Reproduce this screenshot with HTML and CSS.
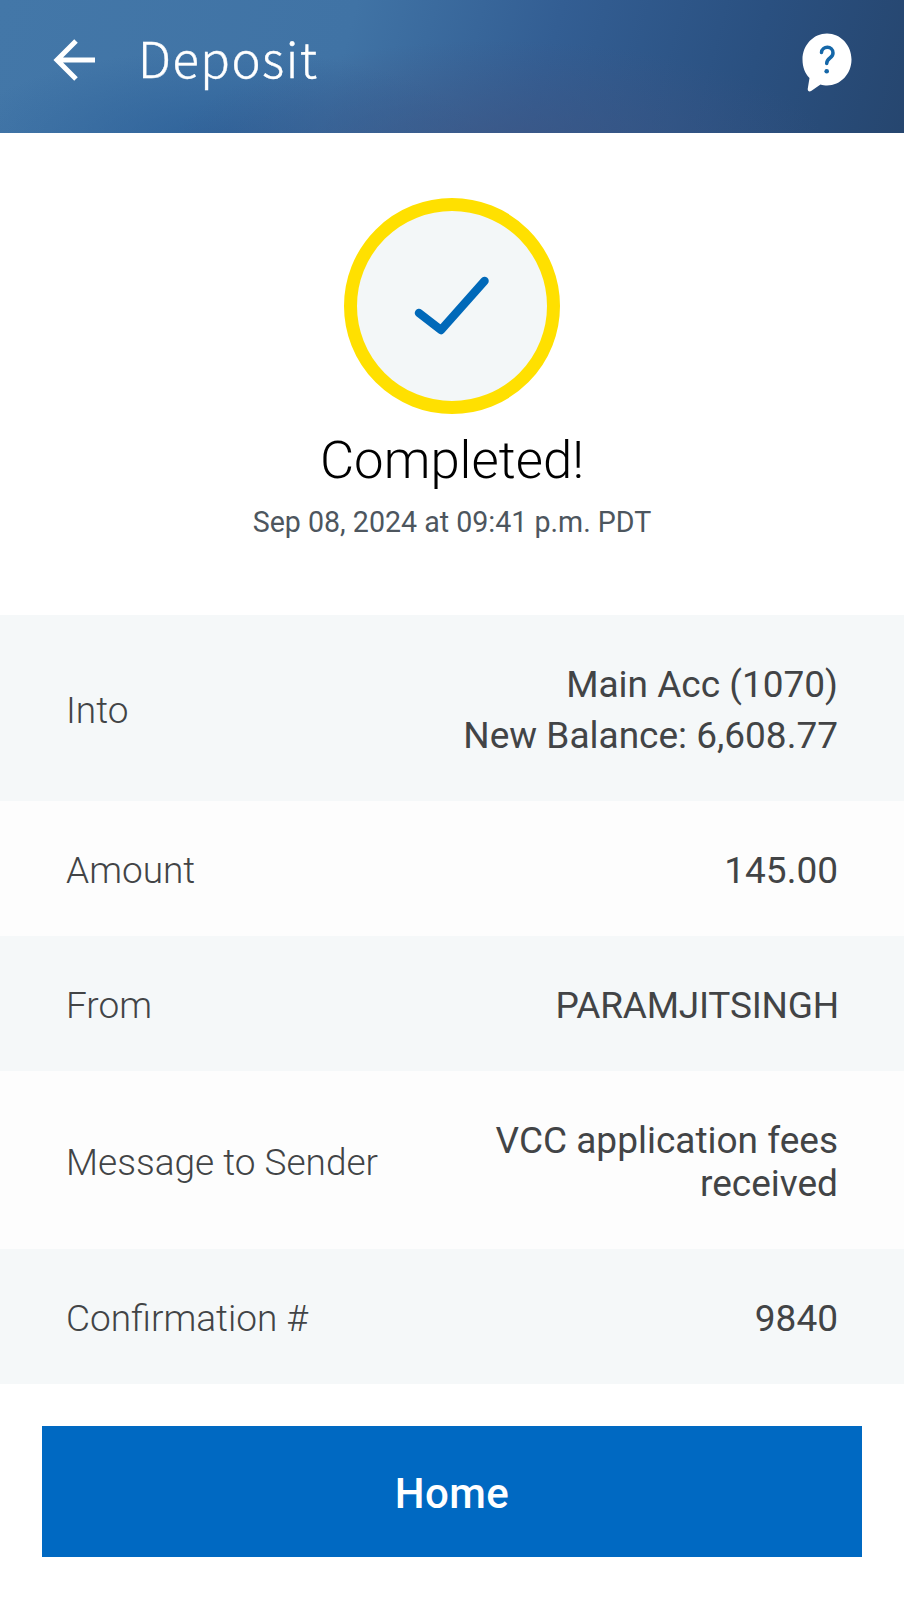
FILE: index.html
```html
<!DOCTYPE html>
<html lang="en">

<head>
    <meta charset="UTF-8">
    <meta name="viewport" content="width=device-width, initial-scale=1.0">
    <title>Deposit</title>
    <link rel="stylesheet" href="styles.css">
</head>

<body>

    <header class="header">
        <svg class="back" width="44" height="44" viewBox="0 0 44 44">
            <path d="M42 22H4M23 3L4 22l19 19" fill="none" stroke="#fff" stroke-width="5"/>
        </svg>
        <h1>Deposit</h1>
        <svg class="help" width="50" height="60" viewBox="0 0 50 60">
            <path d="M25 0.500C38.500 0.500 49.500 12 49.500 26.500S38.500 52.500 25 52.500C23 52.500 20.500 52.300 18.500 51.500L9.500 57.800C7.500 59.200 5.600 58.500 5.700 56L7.500 45C3 40.500 0.500 34 0.500 26.500C0.500 12 11.500 0.500 25 0.500Z" fill="#fff"/>
            <path d="M19.500 19.500C20 12.500 31 12.500 31 20C31 25.500 24.700 24.500 24.700 30.500" fill="none" stroke="#1567a8" stroke-width="3.500" stroke-linecap="round"/>
            <circle cx="24.700" cy="38.300" r="2.300" fill="#1567a8"/>
        </svg>
    </header>

    <section class="status">
        <div class="circle">
            <svg width="76" height="60" viewBox="0 0 76 60">
                <path d="M5 37L27 54L70.500 5" fill="none" stroke="#0069b9" stroke-width="8.500" stroke-linecap="round" stroke-linejoin="round"/>
            </svg>
        </div>
        <h2>Completed!</h2>
        <p>Sep 08, 2024 at 09:41 p.m. PDT</p>
    </section>

    <div class="details">
        <div class="row into">
            <span class="label">Into</span>
            <span class="value">Main Acc (1070)<br>New Balance: 6,608.77</span>
        </div>
        <div class="row">
            <span class="label">Amount</span>
            <span class="value">145.00</span>
        </div>
        <div class="row">
            <span class="label">From</span>
            <span class="value name">PARAMJITSINGH</span>
        </div>
        <div class="row message">
            <span class="label">Message to Sender</span>
            <span class="value">VCC application fees received</span>
        </div>
        <div class="row">
            <span class="label">Confirmation #</span>
            <span class="value">9840</span>
        </div>
    </div>

    <button class="home">Home</button>

</body>

</html>
```
FILE: styles.css
```css
* {
    box-sizing: border-box;
}

body {
    font-family: Roboto, sans-serif;
    margin: 0;
    background-color: #fff;
}

.header {
    display: flex;
    align-items: flex-start;
    height: 133px;
    padding: 0 52px 0 53px;
    color: #fff;
    background-image:
        radial-gradient(ellipse 330px 110px at 500px 150px, rgba(62, 84, 130, 0.7), transparent),
        radial-gradient(ellipse 260px 90px at 220px 140px, rgba(40, 92, 150, 0.7), transparent),
        linear-gradient(105deg, #4377a8 0%, #4073a5 38%, #335e93 60%, #2a5080 82%, #26466f 100%);
}

.back {
    margin-top: 38px;
}

.header h1 {
    font-family: "Noto Sans CJK SC", sans-serif;
    font-weight: 300;
    font-size: 49px;
    line-height: 70px;
    letter-spacing: 1.500px;
    margin: 22px 0 0 41px;
    -webkit-text-stroke: 0.400px #fff;
}

.help {
    margin: 33px 0 0 auto;
}

.status {
    display: flex;
    flex-direction: column;
    align-items: center;
    height: 482px;
    padding-top: 65px;
}

.circle {
    display: flex;
    align-items: center;
    justify-content: center;
    width: 216px;
    height: 216px;
    border: 13px solid #ffe000;
    border-radius: 50%;
    background-color: #f3f7f8;
}

.status h2 {
    font-weight: 300;
    font-size: 52.700px;
    line-height: 60px;
    margin: 16px 0 0;
    color: #000;
}

.status p {
    font-size: 28.600px;
    line-height: 34px;
    margin: 15px 0 0;
    color: #4d565e;
}

.row {
    display: flex;
    align-items: center;
    justify-content: space-between;
    height: 135px;
    padding: 4px 66px 0;
    background-color: #fdfdfd;
    color: #424446;
    font-size: 37px;
    line-height: 43px;
}

.row:nth-child(odd) {
    background-color: #f5f8f9;
}

.into {
    height: 186px;
    line-height: 51px;
}

.message {
    height: 178px;
}

.label {
    font-weight: 300;
}

.value {
    text-align: right;
}

.name {
    letter-spacing: -0.200px;
    margin-right: -1px;
}

.message .value {
    width: 360px;
}

.home {
    display: block;
    width: 820px;
    height: 131px;
    margin: 42px auto 0;
    padding-top: 5px;
    border: none;
    background-color: #0069c2;
    color: #fff;
    font-family: Roboto, sans-serif;
    font-weight: 500;
    font-size: 42px;
    letter-spacing: 0.500px;
}
```
